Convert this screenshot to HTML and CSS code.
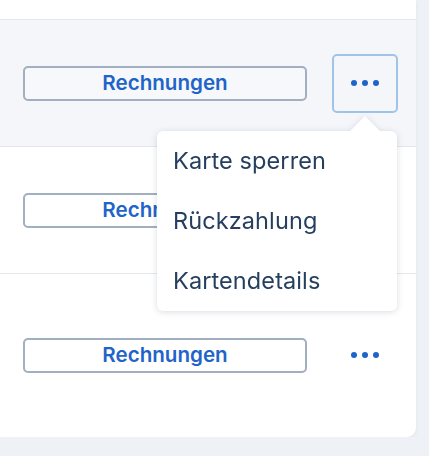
FILE: index.html
```html
<!DOCTYPE html>
<html lang="de">
<head>
<meta charset="utf-8">
<link rel="stylesheet" href="styles.css">
</head>
<body>
<div class="card">
  <div class="row-top"></div>
  <div class="row row-active">
    <button class="btn-outline">Rechnungen</button>
    <div class="actions">
      <button class="btn-dots btn-dots-open" aria-label="Mehr">
        <span class="dot"></span><span class="dot"></span><span class="dot"></span>
      </button>
      <div class="menu">
        <div class="menu-arrow"></div>
        <ul class="menu-list">
          <li class="menu-item">Karte sperren</li>
          <li class="menu-item">Rückzahlung</li>
          <li class="menu-item">Kartendetails</li>
        </ul>
      </div>
    </div>
  </div>
  <div class="row">
    <button class="btn-outline">Rechnungen</button>
    <div class="actions">
      <button class="btn-dots" aria-label="Mehr">
        <span class="dot"></span><span class="dot"></span><span class="dot"></span>
      </button>
    </div>
  </div>
  <div class="row row-last">
    <button class="btn-outline">Rechnungen</button>
    <div class="actions">
      <button class="btn-dots" aria-label="Mehr">
        <span class="dot"></span><span class="dot"></span><span class="dot"></span>
      </button>
    </div>
  </div>
</div>
</body>
</html>
```
FILE: styles.css
```css
* { box-sizing: border-box; }
html, body {
  margin: 0;
  padding: 0;
  background: #eef1f5;
  font-family: Inter, "Noto Sans", sans-serif;
}
.card {
  width: 416px;
  height: 437px;
  background: #ffffff;
  border-bottom-right-radius: 9px;
  box-shadow: 0 1px 4px rgba(30, 50, 80, 0.06);
  overflow: visible;
}
.row-top {
  height: 19px;
}
.row {
  display: flex;
  align-items: center;
  height: 127px;
  border-top: 1px solid #e3e7ed;
  padding: 0 18px 0 23px;
  gap: 25px;
}
.row-active {
  background: #f4f6fa;
}
.row-last {
  height: 164px;
  padding-bottom: 0;
}
.btn-outline {
  width: 284px;
  height: 35px;
  border: 2.5px solid #a1afc0;
  border-radius: 5px;
  background: #ffffff;
  color: #1f64c8;
  font-family: Inter, "Noto Sans", sans-serif;
  font-size: 20.6px;
  font-weight: 600;
  padding: 0;
  line-height: 1;
}
.row-active .btn-outline {
  background: #f6f8fb;
}
.actions {
  position: relative;
  width: 66px;
  height: 59px;
}
.btn-dots {
  width: 66px;
  height: 59px;
  border: 2.5px solid transparent;
  border-radius: 5px;
  background: transparent;
  display: flex;
  align-items: center;
  justify-content: center;
  gap: 5px;
  padding: 0 0 1px 0;
}
.btn-dots-open {
  border-color: #a0c4e8;
}
.dot {
  width: 6px;
  height: 6px;
  border-radius: 50%;
  background: #1f64c8;
}
.menu {
  position: absolute;
  right: 1px;
  top: 62px;
  width: 240px;
  filter: drop-shadow(0 1px 3px rgba(20, 40, 70, 0.16));
  z-index: 5;
}
.menu-arrow {
  width: 0;
  height: 0;
  margin: 0 17px 0 auto;
  border-left: 15px solid transparent;
  border-right: 15px solid transparent;
  border-bottom: 15px solid #ffffff;
}
.menu-list {
  list-style: none;
  margin: 0;
  padding: 0;
  background: #ffffff;
  border-radius: 6px;
}
.menu-item {
  height: 60px;
  display: flex;
  align-items: center;
  padding-left: 16px;
  font-size: 23.5px;
  color: #263f5e;
  letter-spacing: 0.1px;
}
```
